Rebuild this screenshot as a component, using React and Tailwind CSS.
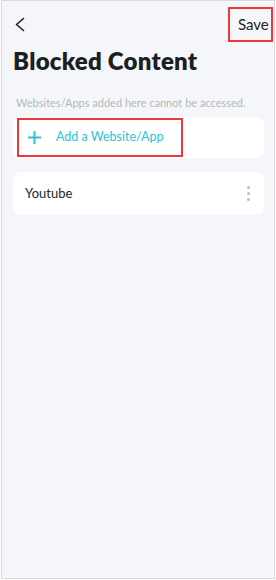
import React from 'react';

const items = [{ id: 'yt', name: 'Youtube' }];

const ChevronLeft = () => (
  <svg width="12" height="15" viewBox="0 0 12 15" fill="none">
    <path d="M9.5 1.5 L2.5 7.5 L9.5 13.5" stroke="#1c1f23" strokeWidth="1.6" strokeLinecap="round" strokeLinejoin="round" />
  </svg>
);

const Plus = () => (
  <svg width="13" height="13" viewBox="0 0 13 13" fill="none">
    <path d="M6.5 0.5 V12.5 M0.5 6.5 H12.5" stroke="#2ec4cf" strokeWidth="2" strokeLinecap="round" />
  </svg>
);

export default function App() {
  return (
    <div className="w-[276px] h-[580px] bg-white px-[1px] pb-[1px]" style={{ fontFamily: 'Lato, "Noto Sans", sans-serif' }}>
      <div className="h-full border border-[#d9dadd] bg-[#f5f6fa]">
        {/* Header */}
        <div className="flex items-center justify-between pl-[12px] pr-[1px] pt-[6px]">
          <button className="flex h-[24px] w-[24px] items-center">
            <ChevronLeft />
          </button>
          <button className="h-[35px] w-[45px] border-2 border-[#f0353b] pl-[8px] text-left text-[15px] text-[#222428]">
            Save
          </button>
        </div>

        <h1 className="mt-[5px] pl-[11px] text-[24px] font-extrabold leading-[28px] tracking-[0.25px] text-[#1b1f23]">
          Blocked Content
        </h1>

        <p className="mt-[22px] pl-[14px] text-[11px] leading-[12px] text-[#b3b6bc]">
          Websites/Apps added here cannot be accessed.
        </p>

        <div className="mt-[8px] flex flex-col gap-[14px] pl-[11px] pr-[10px]">
          <div className="rounded-[8px] bg-white py-[1px] pl-[4px]">
            <div className="flex h-[39px] w-[166px] items-center gap-[15px] border-2 border-[#f0353b] pl-[9px] text-[12.5px] text-[#2ec4cf]">
              <Plus />
              <span>Add a Website/App</span>
            </div>
          </div>

          {items.map((item) => (
            <div key={item.id} className="flex h-[43px] items-center justify-between rounded-[8px] bg-white pl-[12px] pr-[14px]">
              <span className="text-[13px] text-[#23262a]">{item.name}</span>
              <div className="flex flex-col gap-[3px]">
                <span className="h-[3px] w-[3px] rounded-full bg-[#b9bbbf]"></span>
                <span className="h-[3px] w-[3px] rounded-full bg-[#b9bbbf]"></span>
                <span className="h-[3px] w-[3px] rounded-full bg-[#b9bbbf]"></span>
              </div>
            </div>
          ))}
        </div>
      </div>
    </div>
  );
}
